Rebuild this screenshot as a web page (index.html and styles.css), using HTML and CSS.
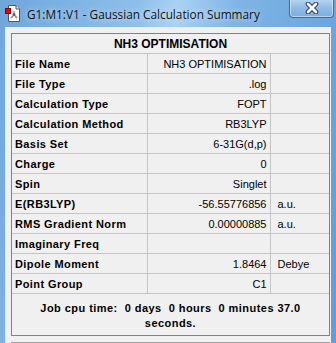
FILE: index.html
```html
<!DOCTYPE html>
<html lang="en">
<head>
  <meta charset="UTF-8" />
  <title>Gaussian Calculation Summary</title>
  <link rel="stylesheet" href="styles.css">
</head>
<body>

  <div class="window">
    <div class="titlebar">
      <svg class="app-icon" width="16" height="17" viewBox="0 0 16 17">
        <path d="M3.5 0.5 H11 L14.5 4 V16.5 H3.5 Z" fill="#fff" stroke="#555" />
        <path d="M11 0.5 V4 H14.5" fill="#e8e8e8" stroke="#555" />
        <line x1="9" y1="6" x2="9" y2="9.5" stroke="#888" stroke-width="1.2" />
        <line x1="9" y1="9.5" x2="6.5" y2="12.5" stroke="#888" stroke-width="1.2" />
        <line x1="9" y1="9.5" x2="11.5" y2="12.5" stroke="#888" stroke-width="1.2" />
        <circle cx="9" cy="9.5" r="1.4" fill="#666" />
        <circle cx="6.5" cy="12.5" r="1.1" fill="#999" />
        <circle cx="11.5" cy="12.5" r="1.1" fill="#999" />
        <rect x="0.5" y="3.5" width="5" height="5" fill="#e00" stroke="#900" />
      </svg>
      <span class="title">G1:M1:V1 - Gaussian Calculation Summary</span>
      <div class="close-btn">
        <svg width="18" height="12" viewBox="0 0 18 12">
          <path d="M5 2 L13 10 M13 2 L5 10" stroke="#2c3e55" stroke-width="4.6" stroke-linecap="round" />
          <path d="M5 2 L13 10 M13 2 L5 10" stroke="#fff" stroke-width="2.6" stroke-linecap="round" />
        </svg>
      </div>
    </div>

    <div class="client">
      <div class="summary">
        <table class="summary-table">
          <colgroup>
            <col class="col-label">
            <col class="col-value">
            <col class="col-unit">
          </colgroup>
          <tr><th colspan="3" class="heading">NH3 OPTIMISATION</th></tr>
          <tr><td class="label">File Name</td><td class="value">NH3 OPTIMISATION</td><td class="unit"></td></tr>
          <tr><td class="label">File Type</td><td class="value">.log</td><td class="unit"></td></tr>
          <tr><td class="label">Calculation Type</td><td class="value">FOPT</td><td class="unit"></td></tr>
          <tr><td class="label">Calculation Method</td><td class="value">RB3LYP</td><td class="unit"></td></tr>
          <tr><td class="label">Basis Set</td><td class="value">6-31G(d,p)</td><td class="unit"></td></tr>
          <tr><td class="label">Charge</td><td class="value">0</td><td class="unit"></td></tr>
          <tr><td class="label">Spin</td><td class="value">Singlet</td><td class="unit"></td></tr>
          <tr><td class="label">E(RB3LYP)</td><td class="value">-56.55776856</td><td class="unit">a.u.</td></tr>
          <tr><td class="label">RMS Gradient Norm</td><td class="value">0.00000885</td><td class="unit">a.u.</td></tr>
          <tr><td class="label">Imaginary Freq</td><td class="value"></td><td class="unit"></td></tr>
          <tr><td class="label">Dipole Moment</td><td class="value">1.8464</td><td class="unit">Debye</td></tr>
          <tr><td class="label">Point Group</td><td class="value">C1</td><td class="unit"></td></tr>
        </table>
        <div class="cpu-time">Job cpu time:  0 days  0 hours  0 minutes 37.0 seconds.</div>
      </div>
      <div class="next-panel"></div>
    </div>
  </div>

</body>
</html>
```

FILE: styles.css
```css
html, body {
  margin: 0;
  padding: 0;
  overflow: hidden;
  width: 336px;
  height: 343px;
}

.window {
  width: 336px;
  height: 343px;
  background: linear-gradient(100deg, #6ea6dc 0%, #8dbfea 35%, #a9d2f2 45%, #7fb4e4 60%, #5f9ddb 100%);
  display: flex;
  flex-direction: column;
  box-sizing: border-box;
}

.titlebar {
  height: 27px;
  display: flex;
  align-items: flex-start;
  position: relative;
  flex-shrink: 0;
}

.app-icon {
  margin: 5px 0 0 5px;
}

.title {
  margin: 6px 0 0 6px;
  font-family: "Open Sans", "Noto Sans", sans-serif;
  font-size: 11.8px;
  color: #111;
  text-shadow: 0 0 6px rgba(255, 255, 255, 0.8);
  white-space: nowrap;
}

.close-btn {
  position: absolute;
  top: -1px;
  left: 289px;
  width: 43px;
  height: 18px;
  border: 1px solid #4a6a93;
  border-top: none;
  border-radius: 0 0 4px 4px;
  background: linear-gradient(#b9d6f1, #8fbbe6 50%, #7aaee0);
  box-shadow: inset 0 0 0 1px rgba(255, 255, 255, 0.45);
  display: flex;
  align-items: center;
  justify-content: center;
}

.client {
  flex: 1;
  margin: 0 5px 0 5px;
  border-left: 1px solid #dde8f3;
  background: #f0f0f0;
  padding: 6px 0 0 5px;
  box-sizing: border-box;
}

.summary {
  width: 319px;
  border: 1px solid #828282;
  box-sizing: border-box;
  font-family: "Liberation Sans", Arial, sans-serif;
  color: #000;
}

.summary-table {
  width: 100%;
  border-collapse: collapse;
  table-layout: fixed;
}

.col-label {
  width: 135px;
}

.col-value {
  width: 123px;
}

.col-unit {
  width: 59px;
}

.summary-table th,
.summary-table td {
  height: 19px;
  padding: 0 3px;
  border: 1px solid #c4c4c4;
  font-size: 11px;
  white-space: nowrap;
  overflow: hidden;
}

.summary-table tr:first-child th {
  border-top: none;
}

.summary-table th:first-child,
.summary-table td:first-child {
  border-left: none;
}

.summary-table th:last-child,
.summary-table td:last-child {
  border-right: none;
}

.heading {
  font-size: 12px !important;
  font-weight: bold;
  text-align: center;
}

.label {
  font-weight: bold;
  letter-spacing: 0.4px;
}

.value {
  text-align: right;
}

.unit {
  text-align: left;
  padding-left: 7px !important;
}

.cpu-time {
  border-top: 1px solid #c4c4c4;
  margin-top: -1px;
  height: 42px;
  padding: 7px 18px 0;
  box-sizing: border-box;
  text-align: center;
  font-weight: bold;
  font-size: 11px;
  letter-spacing: 0.45px;
  line-height: 15px;
  white-space: pre-wrap;
}

.next-panel {
  width: 319px;
  height: 6px;
  margin-top: 6px;
  border: 1px solid #a0a0a0;
  border-bottom: none;
  box-sizing: border-box;
}
```
